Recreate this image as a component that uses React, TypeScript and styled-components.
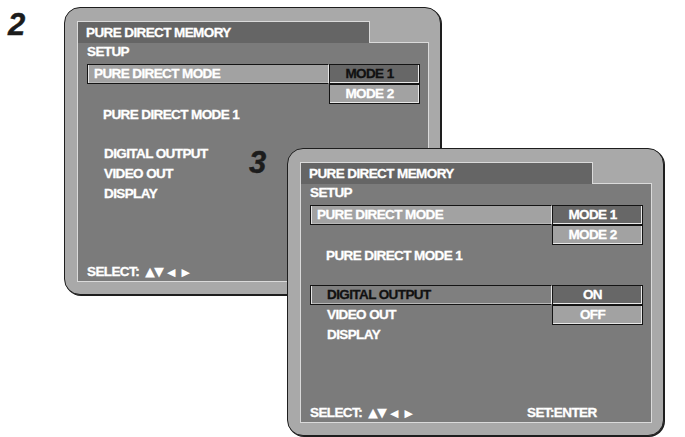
import React from 'react';
import styled, { createGlobalStyle } from 'styled-components';

const Global = createGlobalStyle`
  html, body { margin: 0; padding: 0; background: #ffffff; }
  body { font-family: "Liberation Sans", Arial, sans-serif; }
`;

const Canvas = styled.div`
  position: relative;
  width: 685px;
  height: 437px;
  overflow: hidden;
  background: #ffffff;
`;

const StepNumber = styled.div<{ $x: number; $y: number }>`
  position: absolute;
  left: ${(p) => p.$x}px;
  top: ${(p) => p.$y}px;
  font: italic bold 31px/1 "Liberation Sans", Arial, sans-serif;
  color: #1c1c1c;
  -webkit-text-stroke: 0.4px #1c1c1c;
`;

const Monitor = styled.div<{ $x: number; $y: number }>`
  position: absolute;
  left: ${(p) => p.$x}px;
  top: ${(p) => p.$y}px;
  width: 377px;
  height: 288px;
  box-sizing: border-box;
  background: #a9a9a9;
  border: 1px solid #1e1e1e;
  border-radius: 16px;
  box-shadow: 1px 1px 0 #1e1e1e;
  padding: 13px 11px 12px 12px;
  display: flex;
  flex-direction: column;
`;

const TitleTab = styled.div`
  position: relative;
  z-index: 1;
  width: 293px;
  height: 22px;
  box-sizing: border-box;
  margin-bottom: -1px;
  padding-left: 8px;
  background: #656565;
  border: 1px solid #dadada;
  border-bottom: none;
  color: #ffffff;
  font-weight: bold;
  font-size: 13.5px;
  line-height: 21px;
  letter-spacing: -0.6px;
  -webkit-text-stroke: 0.3px currentColor;
  white-space: nowrap;
`;

const ScreenBody = styled.div`
  flex: 1;
  display: flex;
  flex-direction: column;
  background: #7b7b7b;
  border: 1px solid #dadada;
  color: #ffffff;
  font-weight: bold;
  font-size: 13.5px;
  letter-spacing: -0.6px;
  -webkit-text-stroke: 0.3px currentColor;
  white-space: nowrap;
`;

const Heading = styled.div`
  padding-left: 9px;
  line-height: 18px;
`;

const InfoLine = styled.div<{ $gapTop: number }>`
  margin-top: ${(p) => p.$gapTop}px;
  padding-left: 25px;
  line-height: 18px;
`;

const MenuRow = styled.div<{ $gapTop?: number }>`
  display: flex;
  align-items: flex-start;
  margin-top: ${(p) => p.$gapTop ?? 0}px;
  margin-left: 9px;
`;

const RowLabel = styled.div<{ $tone: 'plain' | 'light' | 'cursor'; $indent: number }>`
  width: 242px;
  height: 20px;
  box-sizing: border-box;
  padding-left: ${(p) => p.$indent}px;
  line-height: 18px;
  border: 1px solid ${(p) => (p.$tone === 'plain' ? 'transparent' : '#141414')};
  border-right-color: ${(p) => (p.$tone === 'plain' ? 'transparent' : '#e4e4e4')};
  background: ${(p) => (p.$tone === 'light' ? '#a2a2a2' : p.$tone === 'cursor' ? '#7f7f7f' : 'transparent')};
  box-shadow: ${(p) => (p.$tone === 'plain' ? 'none' : 'inset 1px 0 0 #e4e4e4, inset 0 -1px 0 #b8b8b8')};
  color: ${(p) => (p.$tone === 'cursor' ? '#111111' : '#ffffff')};
`;

const OptionStack = styled.div`
  display: flex;
  flex-direction: column;
  width: 91px;
`;

const OptionCell = styled.div<{ $tone: 'dark' | 'light'; $ink: 'white' | 'black' }>`
  height: 20px;
  box-sizing: border-box;
  padding-right: 10px;
  text-align: center;
  line-height: 18px;
  border: 1px solid #141414;
  background: ${(p) => (p.$tone === 'dark' ? '#676767' : '#a2a2a2')};
  box-shadow: inset -1px -1px 0 #e8e8e8;
  color: ${(p) => (p.$ink === 'black' ? '#111111' : '#ffffff')};
`;

const Footer = styled.div`
  margin-top: auto;
  display: grid;
  grid-template-columns: 217px auto;
  padding-left: 9px;
  line-height: 16px;
`;

const SelectHint = styled.div`
  display: flex;
  align-items: baseline;
`;

const Arrow = styled.span<{ $gap: number; $size: number }>`
  margin-left: ${(p) => p.$gap}px;
  font-family: "DejaVu Sans", sans-serif;
  font-size: ${(p) => p.$size}px;
  line-height: 16px;
  letter-spacing: 0;
  -webkit-text-stroke: 0;
`;

type Option = { text: string; tone: 'dark' | 'light'; ink: 'white' | 'black' };

type ScreenSpec = {
  step: string;
  x: number;
  y: number;
  labelX: number;
  labelY: number;
  modeOptions: Option[];
  outputCursor: boolean;
};

const screens: ScreenSpec[] = [
  {
    step: '2',
    x: 64,
    y: 7,
    labelX: 8,
    labelY: 9,
    modeOptions: [
      { text: 'MODE 1', tone: 'dark', ink: 'black' },
      { text: 'MODE 2', tone: 'light', ink: 'white' },
    ],
    outputCursor: false,
  },
  {
    step: '3',
    x: 287,
    y: 148,
    labelX: 249,
    labelY: 147,
    modeOptions: [
      { text: 'MODE 1', tone: 'dark', ink: 'white' },
      { text: 'MODE 2', tone: 'light', ink: 'white' },
    ],
    outputCursor: true,
  },
];

const onOff: Option[] = [
  { text: 'ON', tone: 'dark', ink: 'white' },
  { text: 'OFF', tone: 'light', ink: 'white' },
];

function Options({ items }: { items: Option[] }) {
  return (
    <OptionStack>
      {items.map((o) => (
        <OptionCell key={o.text} $tone={o.tone} $ink={o.ink}>
          {o.text}
        </OptionCell>
      ))}
    </OptionStack>
  );
}

function Screen({ spec }: { spec: ScreenSpec }) {
  return (
    <Monitor $x={spec.x} $y={spec.y}>
      <TitleTab>PURE DIRECT MEMORY</TitleTab>
      <ScreenBody>
        <Heading>SETUP</Heading>
        <MenuRow $gapTop={3}>
          <RowLabel $tone="light" $indent={6}>PURE DIRECT MODE</RowLabel>
          <Options items={spec.modeOptions} />
        </MenuRow>
        <InfoLine $gapTop={2}>PURE DIRECT MODE 1</InfoLine>
        <MenuRow $gapTop={20}>
          <RowLabel $tone={spec.outputCursor ? 'cursor' : 'plain'} $indent={16}>
            DIGITAL OUTPUT
          </RowLabel>
          {spec.outputCursor && <Options items={onOff} />}
        </MenuRow>
        <MenuRow $gapTop={spec.outputCursor ? -20 : 0}>
          <RowLabel $tone="plain" $indent={16}>VIDEO OUT</RowLabel>
        </MenuRow>
        <MenuRow>
          <RowLabel $tone="plain" $indent={16}>DISPLAY</RowLabel>
        </MenuRow>
        <Footer>
          <SelectHint>
            SELECT:
            <Arrow $gap={6} $size={13}>▲</Arrow>
            <Arrow $gap={-1} $size={13}>▼</Arrow>
            <Arrow $gap={3} $size={11}>◀</Arrow>
            <Arrow $gap={6} $size={11}>▶</Arrow>
          </SelectHint>
          <span>SET:ENTER</span>
        </Footer>
      </ScreenBody>
    </Monitor>
  );
}

export default function App() {
  return (
    <Canvas>
      <Global />
      {screens.map((s) => (
        <React.Fragment key={s.step}>
          <StepNumber $x={s.labelX} $y={s.labelY}>{s.step}</StepNumber>
          <Screen spec={s} />
        </React.Fragment>
      ))}
    </Canvas>
  );
}
